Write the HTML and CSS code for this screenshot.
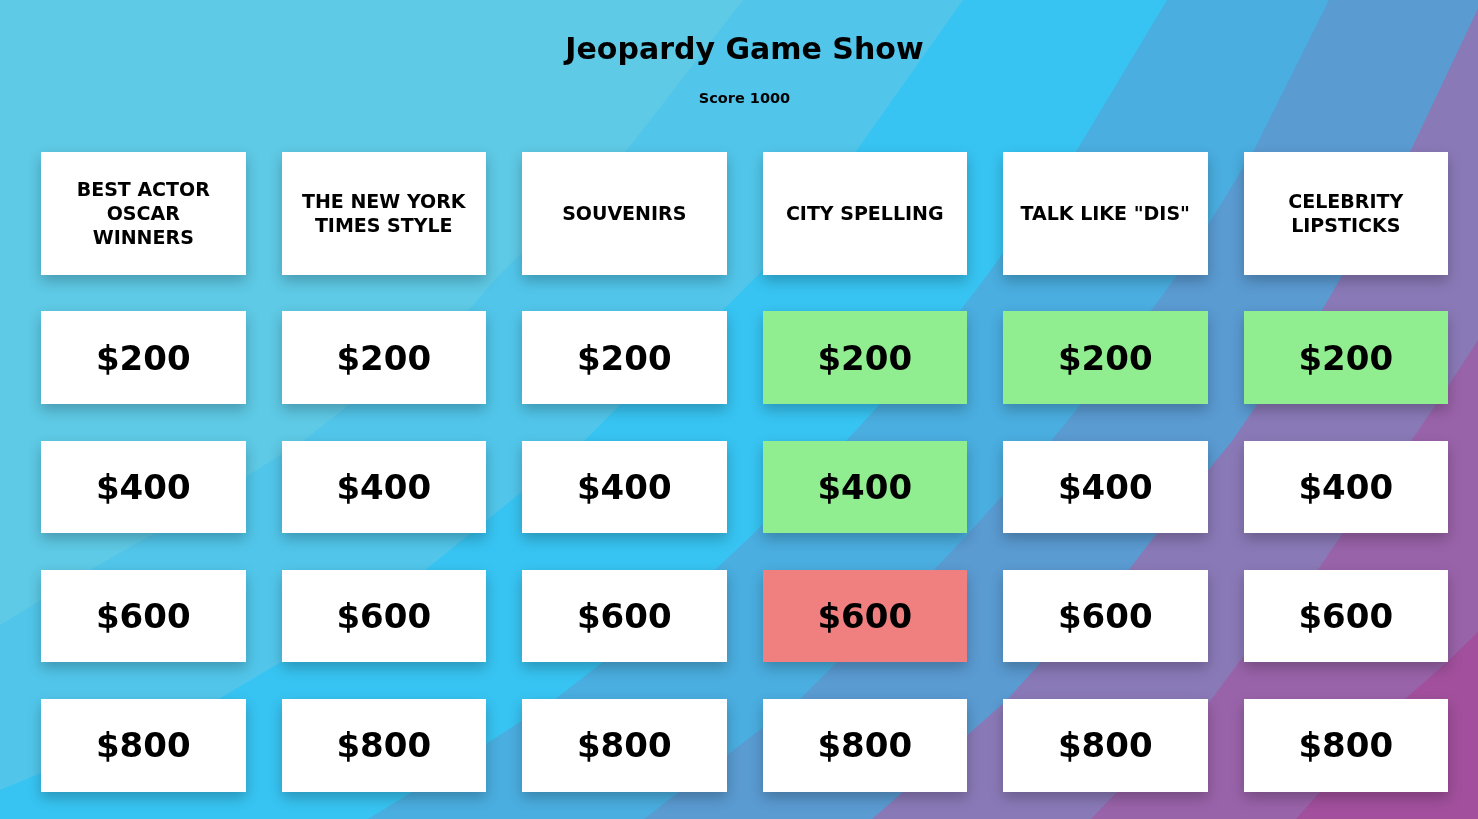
FILE: index.html
```html
<!DOCTYPE html>
<html lang="en">
<head>
<meta charset="utf-8">
<title>Jeopardy Game Show</title>
<link rel="stylesheet" href="styles.css">
</head>
<body>
<svg class="bg" viewBox="0 0 1478 819" preserveAspectRatio="none" aria-hidden="true">
  <rect x="0" y="0" width="1478" height="819" fill="#5ecae6"/>
  <polygon fill="#51c6ea" points="743,0 627,150 500,274 467,312 351,403 303,441 155,533 88,571 0,625 0,819 1478,819 1478,0"/>
  <polygon fill="#37c4f2" points="963,0 857,150 759,274 721,312 622,403 584,441 471,533 424,571 281,662 217,700 0,790 0,819 1478,819 1478,0"/>
  <polygon fill="#4aaee0" points="1167,0 1077,150 988,274 959,312 881,403 846,441 754,533 714,571 603,662 554,700 412,792 368,819 1478,819 1478,0"/>
  <polygon fill="#5a9bd2" points="1329,0 1254,150 1178,274 1150,312 1082,403 1051,441 969,533 933,571 837,662 799,700 679,792 644,819 1478,819 1478,0"/>
  <polygon fill="#8a79b7" points="1482,0 1411,150 1343,274 1321,312 1258,403 1232,441 1157,533 1128,571 1041,662 1007,700 903,792 872,819 1478,819"/>
  <polygon fill="#9963a9" points="1488,325 1437,403 1411,441 1343,533 1317,571 1239,662 1211,700 1117,792 1091,819 1478,819"/>
  <polygon fill="#a2509d" points="1482,628 1447,662 1404,700 1320,792 1296,819 1478,819"/>
</svg>
<main class="page">
  <header class="top">
    <h1 class="title">Jeopardy Game Show</h1>
    <p class="score">Score 1000</p>
  </header>
  <section class="board">
    <div class="card head">BEST ACTOR OSCAR WINNERS</div>
    <div class="card head">THE NEW YORK TIMES STYLE</div>
    <div class="card head">SOUVENIRS</div>
    <div class="card head">CITY SPELLING</div>
    <div class="card head">TALK LIKE "DIS"</div>
    <div class="card head">CELEBRITY LIPSTICKS</div>

    <div class="card val">$200</div>
    <div class="card val">$200</div>
    <div class="card val">$200</div>
    <div class="card val right">$200</div>
    <div class="card val right">$200</div>
    <div class="card val right">$200</div>

    <div class="card val">$400</div>
    <div class="card val">$400</div>
    <div class="card val">$400</div>
    <div class="card val right">$400</div>
    <div class="card val">$400</div>
    <div class="card val">$400</div>

    <div class="card val">$600</div>
    <div class="card val">$600</div>
    <div class="card val">$600</div>
    <div class="card val wrong">$600</div>
    <div class="card val">$600</div>
    <div class="card val">$600</div>

    <div class="card val">$800</div>
    <div class="card val">$800</div>
    <div class="card val">$800</div>
    <div class="card val">$800</div>
    <div class="card val">$800</div>
    <div class="card val">$800</div>
  </section>
</main>
</body>
</html>
```
FILE: styles.css
```css
html, body {
  margin: 0;
  padding: 0;
  height: 100%;
}

body {
  font-family: "DejaVu Sans", "Liberation Sans", sans-serif;
  color: #000;
  overflow: hidden;
}

.bg {
  position: fixed;
  top: 0;
  left: 0;
  width: 100%;
  height: 100%;
  z-index: -1;
}

.page {
  padding: 31px 30px 0 41px;
}

.top {
  display: flex;
  flex-direction: column;
  align-items: center;
}

.title {
  margin: 0;
  font-size: 30px;
  line-height: 36px;
  font-weight: 700;
}

.score {
  margin: 22px 0 0;
  font-size: 14.5px;
  line-height: 18px;
  font-weight: 700;
}

.board {
  margin-top: 45px;
  display: grid;
  grid-template-columns: repeat(6, 1fr);
  grid-template-rows: 122.5px repeat(4, 92.5px);
  column-gap: 36px;
  row-gap: 36.75px;
}

.card {
  background: #fff;
  display: flex;
  align-items: center;
  justify-content: center;
  text-align: center;
  box-shadow: 0 6px 13px rgba(0, 0, 0, 0.24);
}

.head {
  padding: 0 16px;
  font-size: 19px;
  line-height: 24px;
  font-weight: 700;
}

.val {
  font-size: 34px;
  font-weight: 700;
}

.right {
  background: #90ee90;
}

.wrong {
  background: #f08080;
}
```
